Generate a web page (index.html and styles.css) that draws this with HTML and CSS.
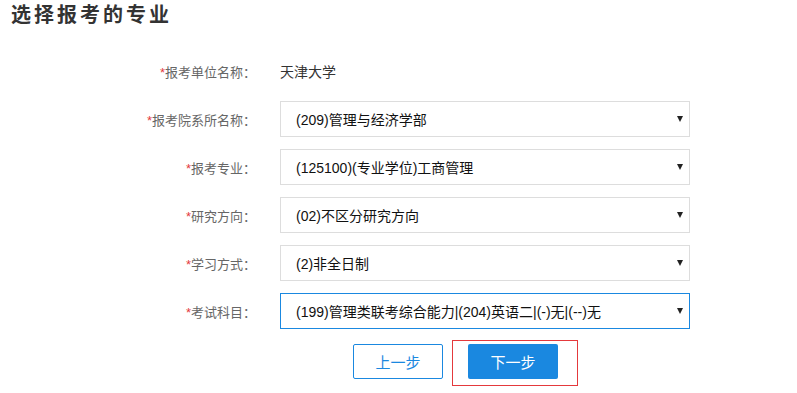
FILE: index.html
```html
<!DOCTYPE html>
<html lang="zh-CN">
<head>
    <meta charset="UTF-8">
    <meta name="viewport" content="width=device-width, initial-scale=1.0">
    <title>选择报考的专业</title>
    <link rel="stylesheet" href="styles.css">
</head>
<body>
    <div class="page">
        <h2 class="title">选择报考的专业</h2>

        <div class="form">
            <div class="row">
                <label class="label"><span class="req">*</span>报考单位名称：</label>
                <div class="value">天津大学</div>
            </div>
            <div class="row">
                <label class="label"><span class="req">*</span>报考院系所名称：</label>
                <div class="select"><span>(209)管理与经济学部</span><i class="arrow"></i></div>
            </div>
            <div class="row">
                <label class="label"><span class="req">*</span>报考专业：</label>
                <div class="select"><span>(125100)(专业学位)工商管理</span><i class="arrow"></i></div>
            </div>
            <div class="row">
                <label class="label"><span class="req">*</span>研究方向：</label>
                <div class="select"><span>(02)不区分研究方向</span><i class="arrow"></i></div>
            </div>
            <div class="row">
                <label class="label"><span class="req">*</span>学习方式：</label>
                <div class="select"><span>(2)非全日制</span><i class="arrow"></i></div>
            </div>
            <div class="row">
                <label class="label"><span class="req">*</span>考试科目：</label>
                <div class="select active"><span>(199)管理类联考综合能力|(204)英语二|(-)无|(--)无</span><i class="arrow"></i></div>
            </div>
        </div>

        <div class="actions">
            <button class="btn btn-prev">上一步</button>
            <div class="highlight">
                <button class="btn btn-next">下一步</button>
            </div>
        </div>
    </div>
</body>
</html>
```

FILE: styles.css
```css
body {
    margin: 0;
    font-family: "Liberation Sans", Arial, "Noto Sans CJK SC", sans-serif;
    background: #fff;
    color: #333;
}
.page {
    padding: 0 11px;
}
.title {
    margin: 0;
    padding-top: 2px;
    height: 51px;
    font-size: 20px;
    font-weight: bold;
    line-height: 26px;
    letter-spacing: 3px;
    color: #333;
}
.row {
    display: flex;
    align-items: center;
    height: 36px;
    margin-bottom: 12px;
}
.label {
    width: 245px;
    padding-right: 24px;
    text-align: right;
    font-size: 13px;
    color: #666;
}
.req {
    color: #e4393c;
}
.value {
    font-size: 14px;
    color: #333;
}
.select {
    box-sizing: border-box;
    width: 410px;
    height: 36px;
    border: 1px solid #ddd;
    display: flex;
    align-items: center;
    justify-content: space-between;
    padding: 0 6px 0 15px;
    font-size: 14px;
    color: #111;
}
.select.active {
    border-color: #1a88e0;
}
.arrow {
    width: 0;
    height: 0;
    border-left: 3px solid transparent;
    border-right: 3px solid transparent;
    border-top: 6px solid #222;
}
.actions {
    display: flex;
    align-items: center;
    margin-left: 342px;
    margin-top: -1px;
    gap: 9px;
}
.btn {
    box-sizing: border-box;
    width: 90px;
    height: 35px;
    font-family: inherit;
    font-size: 15px;
    border-radius: 2px;
    cursor: pointer;
}
.btn-prev {
    background: #fff;
    border: 1px solid #1a88e0;
    color: #1a88e0;
    margin-top: -4px;
}
.btn-next {
    background: #1a88e0;
    border: none;
    color: #fff;
}
.highlight {
    border: 1px solid #e4393c;
    padding: 3px 19px 6px 15px;
}
```
